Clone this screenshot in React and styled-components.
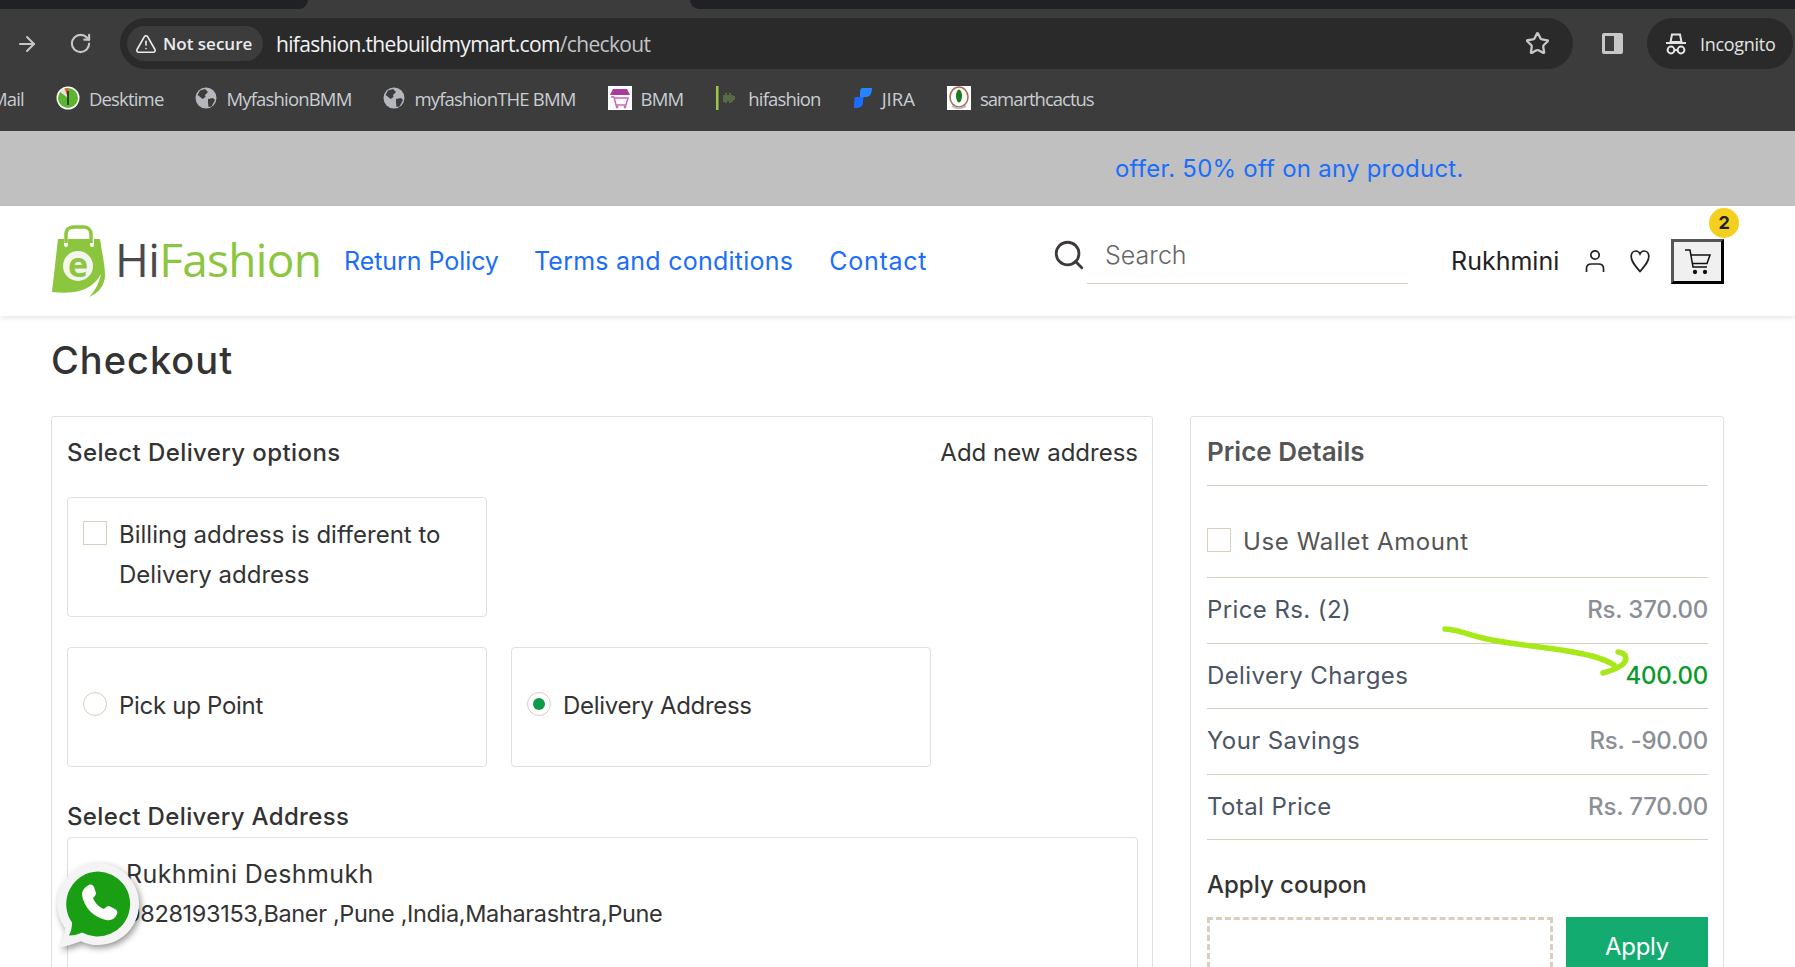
import React from 'react';
import styled, { createGlobalStyle } from 'styled-components';
import { ArrowRight, RotateCw, TriangleAlert, Star, Search } from 'lucide-react';

const GlobalStyle = createGlobalStyle`
  html, body {
    margin: 0;
    padding: 0;
    height: 967px;
    overflow: hidden;
    background: #fff;
    font-family: Inter, "Open Sans", sans-serif;
  }
  * { box-sizing: border-box; }
`;

const Page = styled.div`
  position: relative;
  width: 1795px;
  height: 967px;
  overflow: hidden;
`;

/* browser chrome */
const Chrome = styled.div`
  height: 131px;
  background: #3c3c3c;
  font-family: "Open Sans", sans-serif;
`;

const TabStrip = styled.div`
  display: flex;
  height: 9px;
  background: #3c3c3c;
`;

const TabGap = styled.div`
  width: ${props => props.width || 'auto'};
  flex: ${props => (props.width ? 'none' : 1)};
  background: #202124;
  border-radius: ${props => props.radius};
`;

const TabActive = styled.div`
  width: 382px;
`;

const Toolbar = styled.div`
  display: flex;
  align-items: center;
  height: 51px;
  margin-top: 9px;
  padding-left: 15px;
`;

const NavIcon = styled.div`
  display: flex;
  width: 24px;
  margin-right: ${props => props.gap}px;
  color: #c7c7c7;
`;

const Omnibox = styled.div`
  display: flex;
  align-items: center;
  width: 1453px;
  height: 51px;
  padding: 0 23px 0 7px;
  background: #2a2a2a;
  border-radius: 26px;
`;

const SecurityChip = styled.div`
  display: flex;
  align-items: center;
  gap: 6px;
  width: 136px;
  height: 35px;
  padding-left: 8px;
  background: #3c3c3c;
  border-radius: 18px;
  color: #e8eaed;
  font-size: 17px;
  font-weight: 600;
  white-space: nowrap;
`;

const Url = styled.div`
  flex: 1;
  margin-left: 13px;
  color: #f1f3f4;
  font-size: 21px;
  letter-spacing: -0.66px;
  white-space: nowrap;

  span { color: #c0c3c6; }
`;

const SidePanelIcon = styled.div`
  width: 21px;
  height: 21px;
  margin: 0 24px 0 29px;
  border: 3px solid #c7c7c7;
  border-right-width: 9px;
  border-radius: 2px;
`;

const IncognitoPill = styled.div`
  display: flex;
  align-items: center;
  gap: 13px;
  width: 146px;
  height: 51px;
  padding-left: 18px;
  background: #2a2a2a;
  border-radius: 26px;
  color: #e3e3e3;
  font-size: 18px;
  letter-spacing: -0.3px;
`;

const BookmarkBar = styled.div`
  display: flex;
  align-items: center;
  gap: 32px;
  height: 58px;
  margin-left: -9px;
`;

const Bookmark = styled.div`
  display: flex;
  align-items: center;
  gap: 9px;
  color: #c9cdd1;
  font-size: 18.5px;
  letter-spacing: ${props => props.spacing ?? -0.83}px;
  white-space: nowrap;
`;

/* site */
const Promo = styled.div`
  height: 75px;
  padding-left: 1115px;
  background: #c0c0c0;
  color: #1b6dfb;
  font-size: 24px;
  letter-spacing: 0.23px;
  line-height: 75px;
  white-space: nowrap;
`;

const SiteHeader = styled.header`
  display: flex;
  align-items: center;
  height: 110px;
  padding-left: 50px;
  background: #fff;
  box-shadow: 0 2px 5px rgba(0, 0, 0, 0.1);
`;

const LogoText = styled.div`
  width: 229px;
  margin-left: 8px;
  margin-bottom: 5px;
  color: #8cc63f;
  font-family: "Open Sans", sans-serif;
  font-size: 46px;
  line-height: 60px;
  letter-spacing: -0.7px;

  span { color: #4a4a4a; }
`;

const NavLink = styled.a`
  margin-right: ${props => props.gap}px;
  color: #1b6dfb;
  font-size: 25px;
  letter-spacing: ${props => props.spacing}px;
  white-space: nowrap;
`;

const SearchBox = styled.div`
  position: relative;
  display: flex;
  align-items: center;
  width: 356px;
  height: 66px;
  margin-left: 125px;
  margin-right: 43px;
  padding-left: 50px;
  padding-bottom: 12px;
  color: #666;
  font-size: 25px;
  font-weight: 300;
`;

const SearchIcon = styled.div`
  display: flex;
  margin-left: -50px;
  margin-right: 19px;
  color: #3f3a3a;
`;

const SearchLine = styled.div`
  position: absolute;
  left: 35px;
  right: 0;
  bottom: 10px;
  height: 1px;
  background: #dccfb9;
`;

const UserName = styled.div`
  width: 132px;
  color: #222;
  font-size: 25px;
`;

const HeadIcon = styled.div`
  display: flex;
  justify-content: center;
  width: 24px;
  margin-right: ${props => props.gap}px;
`;

const CartButton = styled.div`
  position: relative;
  display: flex;
  align-items: center;
  justify-content: center;
  width: 53px;
  height: 45px;
  background: #f0f0f0;
  border: 3px solid;
  border-color: #555 #000 #000 #555;
`;

const CartBadge = styled.div`
  position: absolute;
  top: -34px;
  right: -18px;
  width: 30px;
  height: 30px;
  border-radius: 50%;
  background: #f5cf1e;
  color: #222;
  font-size: 18px;
  font-weight: 700;
  line-height: 30px;
  text-align: center;
`;

const Title = styled.h1`
  height: 100px;
  margin: 0;
  padding: 22px 0 0 51px;
  color: #333;
  font-size: 38px;
  font-weight: 500;
  letter-spacing: 1px;
  line-height: 44px;
`;

const Main = styled.div`
  display: grid;
  grid-template-columns: 1102px 534px;
  gap: 37px;
  padding-left: 51px;
`;

const Card = styled.section`
  height: 700px;
  padding: 0 ${props => props.right}px 0 ${props => props.left}px;
  background: #fff;
  border: 1px solid #e6dddd;
  border-radius: 3px;
`;

const LeftHead = styled.div`
  display: flex;
  align-items: center;
  justify-content: space-between;
  height: 70px;
  margin-bottom: 10px;
  color: #333;
  font-size: 24px;
  font-weight: 500;
  letter-spacing: 0.4px;

  span {
    font-weight: 400;
    letter-spacing: 0;
  }
`;

const OptionCard = styled.div`
  display: flex;
  align-items: ${props => (props.center ? 'center' : 'flex-start')};
  gap: 12px;
  width: 420px;
  height: 120px;
  padding: ${props => (props.center ? '0 15px 3px' : '17px 15px')};
  border: 1px solid #e6dddd;
  border-radius: 4px;
  color: #333;
  font-size: 24px;
  letter-spacing: ${props => (props.center ? -0.3 : 0)}px;
  line-height: 40px;
`;

const OptionRow = styled.div`
  display: flex;
  gap: 24px;
  margin-top: 30px;
`;

const CheckBox = styled.div`
  flex: none;
  width: 24px;
  height: 24px;
  margin-top: ${props => props.top}px;
  border: 1px solid #d8cfbf;
  background: #fff;
`;

const Radio = styled.div`
  display: flex;
  flex: none;
  align-items: center;
  justify-content: center;
  width: 24px;
  height: 24px;
  margin-top: -4px;
  border: 1px solid #d8cfbf;
  border-radius: 50%;

  &::after {
    content: '';
    display: ${props => (props.checked ? 'block' : 'none')};
    width: 12px;
    height: 12px;
    border-radius: 50%;
    background: #0d9a4b;
  }
`;

const SectionTitle = styled.div`
  height: 30px;
  margin-top: 35px;
  margin-bottom: 5px;
  color: #333;
  font-size: 24px;
  font-weight: 500;
  letter-spacing: 0.35px;
  line-height: 30px;
`;

const AddressCard = styled.div`
  height: 200px;
  padding: 16px 15px 0 58px;
  border: 1px solid #e6dddd;
  border-radius: 4px;
  color: #333;
`;

const AddressName = styled.div`
  font-size: 25px;
  font-weight: 400;
  letter-spacing: 0.4px;
  line-height: 40px;
`;

const AddressLine = styled.div`
  font-size: 23.5px;
  letter-spacing: -0.35px;
  line-height: 40px;
  white-space: nowrap;
`;

const PriceTitle = styled.div`
  height: 69px;
  border-bottom: 1px solid #d8cfbf;
  color: #555;
  font-size: 26px;
  font-weight: 600;
  line-height: 70px;
`;

const WalletRow = styled.div`
  display: flex;
  align-items: center;
  gap: 12px;
  height: 92px;
  padding-top: 20px;
  border-bottom: 1px solid #d8cfbf;
  color: #555;
  font-size: 24px;
  letter-spacing: 0.6px;
`;

const PriceRow = styled.div`
  display: flex;
  align-items: center;
  justify-content: space-between;
  height: 65.5px;
  padding-bottom: 1px;
  border-bottom: 1px solid #d8cfbf;
  color: #4b5563;
  font-size: 24px;
  letter-spacing: 0.4px;
`;

const PriceValue = styled.span`
  color: ${props => (props.green ? '#0a9a2a' : '#8a8f96')};
  font-weight: 500;
  letter-spacing: -0.2px;
`;

const CouponTitle = styled.div`
  margin-top: 30px;
  color: #333;
  font-size: 24px;
  font-weight: 500;
  line-height: 30px;
`;

const CouponRow = styled.div`
  display: flex;
  gap: 13px;
  margin-top: 17px;
`;

const CouponInput = styled.div`
  width: 346px;
  height: 60px;
  border: 3px dashed #d8cfbf;
`;

const ApplyButton = styled.div`
  width: 142px;
  height: 60px;
  background: #13ab6f;
  color: #fff;
  font-size: 24px;
  letter-spacing: -0.3px;
  line-height: 60px;
  text-align: center;
`;

/* things lying over the page */
const ArrowScribble = styled.svg`
  position: absolute;
  left: 1432px;
  top: 615px;
  pointer-events: none;
`;

const WhatsappFloat = styled.svg`
  position: absolute;
  left: 53px;
  top: 860px;
  filter: drop-shadow(2px 3px 3px rgba(0, 0, 0, 0.4));
`;

const GlobeIcon = () => (
  <svg width="22" height="22" viewBox="0 0 22 22">
    <circle cx="11" cy="11" r="10.5" fill="#b4b8bc" />
    <path d="M5 3.5 10 2 13 5 10 8 10.5 10 7.5 12 4 9 2.5 8ZM13 12l5-1 2 2-3.5 6.5-3 .5-.5-4.5Z" fill="#3c3c3c" />
  </svg>
);

const DesktimeIcon = () => (
  <svg width="24" height="24" viewBox="0 0 24 24">
    <circle cx="12" cy="12" r="11.5" fill="#fff" />
    <circle cx="12" cy="12" r="10" fill="#5cb531" />
    <path d="M12 12V2a10 10 0 0 0-8 4Z" fill="#e4e4e4" />
    <path d="M12 12V2a10 10 0 0 0-3.5.6Z" fill="#e8562a" />
    <path d="M12 5v14" stroke="#222" strokeWidth="1.5" />
  </svg>
);

const BmmIcon = () => (
  <svg width="24" height="24" viewBox="0 0 24 24">
    <rect width="24" height="24" fill="#fff" />
    <path d="M5 3h14l3 6H2Z" fill="#a83b9c" />
    <path d="M3 11h3l2 8h10l2-7H7" fill="none" stroke="#c76ab8" strokeWidth="1.5" />
    <circle cx="9" cy="21" r="1.4" fill="#c76ab8" />
    <circle cx="17" cy="21" r="1.4" fill="#c76ab8" />
  </svg>
);

const HifashionIcon = () => (
  <svg width="24" height="24" viewBox="0 0 24 24">
    <rect x="1" y="0" width="2.5" height="24" fill="#9ac94a" />
    <path d="M9 9v7M11 7v10M13 9v6M15 7v10M17 9v7M19 10v4" stroke="#6c8a4a" strokeWidth="1.2" />
  </svg>
);

const JiraIcon = () => (
  <svg width="20" height="24" viewBox="0 0 20 24">
    <path d="M9 2h10c0 4-1 9-6 9h-2c-3 0-3 2-4 4v-5c0-4 0-8 2-8Z" fill="#2684ff" />
    <path d="M2 11h9c-1 1-1 3-1 5 0 4-2 6-9 6 0-3 0-7 1-11Z" fill="#1a6dff" />
  </svg>
);

const CactusIcon = () => (
  <svg width="24" height="24" viewBox="0 0 24 24">
    <rect width="24" height="24" fill="#fff" />
    <ellipse cx="12" cy="11" rx="9" ry="10" fill="none" stroke="#a5705a" strokeWidth="1.6" />
    <ellipse cx="12" cy="10" rx="3" ry="6.5" fill="#1f7a1f" />
    <path d="M5 20c4 3 10 3 14 0" fill="none" stroke="#bbb" strokeWidth="2" />
  </svg>
);

const IncognitoIcon = () => (
  <svg width="22" height="24" viewBox="0 0 22 24" fill="none" stroke="#e3e3e3" strokeWidth="2">
    <path d="M5.5 10 7 2.5h8L16.5 10Z" />
    <path d="M1 11h20" />
    <circle cx="6" cy="18" r="3.4" />
    <circle cx="16" cy="18" r="3.4" />
    <path d="M9.4 18h3.2" />
  </svg>
);

const PersonIcon = () => (
  <svg width="20" height="24" viewBox="0 0 20 24" fill="none" stroke="#222" strokeWidth="1.7">
    <circle cx="10" cy="6" r="4.2" />
    <path d="M1.5 23v-3.5c0-3 2-4.5 5-4.5h7c3 0 5 1.500 5 4.500V23" />
  </svg>
);

const TallHeartIcon = () => (
  <svg width="20" height="24" viewBox="0 0 20 24" fill="none" stroke="#222" strokeWidth="1.7">
    <path d="M10 22.5C5 16.5 1.2 12.5 1.2 7.5 1.2 4 3.5 2 6 2c2 0 3.2 1.2 4 3 .8-1.8 2-3 4-3 2.500 0 4.800 2 4.800 5.500 0 5-3.800 9-8.800 15Z" />
  </svg>
);

const CartIcon = () => (
  <svg width="28" height="30" viewBox="0 0 28 30" fill="none" stroke="#111" strokeWidth="1.5">
    <path d="M1 4h5l3 17h14" />
    <path d="M7 9h19l-3 8.5H9" />
    <circle cx="11" cy="26" r="1.4" fill="#111" />
    <circle cx="21" cy="26" r="1.4" fill="#111" />
  </svg>
);

const BagLogo = () => (
  <svg width="57" height="72" viewBox="0 0 57 72">
    <path d="M16 18V9c0-5 4-7 8-7h9c5 0 8 3 8 7v9" fill="none" stroke="#8cc63f" strokeWidth="3.5" />
    <path d="M8 14h6v6a2 2 0 0 0 4 0v-6h22v6a2 2 0 0 0 4 0v-6h6c2 14 5 26 5 36 0 10-6 18-16 22 6-6 10-14 12-23-5 9-13 15-22 17-8 2-17 2-27 1Z" fill="#8cc63f" />
    <circle cx="28" cy="41" r="15" fill="#f3f6ee" />
    <text x="28" y="52" textAnchor="middle" fontFamily="Open Sans, sans-serif" fontSize="34" fontWeight="700" fill="#8cc63f">e</text>
  </svg>
);

const App = () => (
  <Page>
    <GlobalStyle />
    <Chrome>
      <TabStrip>
        <TabGap width="308px" radius="0 0 12px 0" />
        <TabActive />
        <TabGap radius="0 0 0 12px" />
      </TabStrip>
      <Toolbar>
        <NavIcon gap={30}><ArrowRight size={24} strokeWidth={2} /></NavIcon>
        <NavIcon gap={27}><RotateCw size={23} strokeWidth={2.2} /></NavIcon>
        <Omnibox>
          <SecurityChip>
            <TriangleAlert size={22} strokeWidth={1.8} />
            Not secure
          </SecurityChip>
          <Url>hifashion.thebuildmymart.com<span>/checkout</span></Url>
          <Star size={25} color="#c7c7c7" strokeWidth={2.2} />
        </Omnibox>
        <SidePanelIcon />
        <IncognitoPill>
          <IncognitoIcon />
          Incognito
        </IncognitoPill>
      </Toolbar>
      <BookmarkBar>
        <Bookmark>Mail</Bookmark>
        <Bookmark><DesktimeIcon />Desktime</Bookmark>
        <Bookmark><GlobeIcon />MyfashionBMM</Bookmark>
        <Bookmark><GlobeIcon />myfashionTHE BMM</Bookmark>
        <Bookmark><BmmIcon />BMM</Bookmark>
        <Bookmark><HifashionIcon />hifashion</Bookmark>
        <Bookmark spacing={0}><JiraIcon />JIRA</Bookmark>
        <Bookmark spacing={-1}><CactusIcon />samarthcactus</Bookmark>
      </BookmarkBar>
    </Chrome>

    <Promo>offer. 50% off on any product.</Promo>

    <SiteHeader>
      <BagLogo />
      <LogoText><span>Hi</span>Fashion</LogoText>
      <NavLink gap={35} spacing={-0.06}>Return Policy</NavLink>
      <NavLink gap={36} spacing={0.25}>Terms and conditions</NavLink>
      <NavLink gap={0} spacing={0.7}>Contact</NavLink>
      <SearchBox>
        <SearchIcon><Search size={34} strokeWidth={2} /></SearchIcon>
        Search
        <SearchLine />
      </SearchBox>
      <UserName>Rukhmini</UserName>
      <HeadIcon gap={21}><PersonIcon /></HeadIcon>
      <HeadIcon gap={19}><TallHeartIcon /></HeadIcon>
      <CartButton>
        <CartIcon />
        <CartBadge>2</CartBadge>
      </CartButton>
    </SiteHeader>

    <Title>Checkout</Title>

    <Main>
      <Card left={15} right={14}>
        <LeftHead>
          Select Delivery options
          <span>Add new address</span>
        </LeftHead>
        <OptionCard>
          <CheckBox top={6} />
          <div>Billing address is different to<br />Delivery address</div>
        </OptionCard>
        <OptionRow>
          <OptionCard center>
            <Radio />
            Pick up Point
          </OptionCard>
          <OptionCard center>
            <Radio checked />
            Delivery Address
          </OptionCard>
        </OptionRow>
        <SectionTitle>Select Delivery Address</SectionTitle>
        <AddressCard>
          <AddressName>Rukhmini Deshmukh</AddressName>
          <AddressLine>9828193153,Baner ,Pune ,India,Maharashtra,Pune</AddressLine>
        </AddressCard>
      </Card>

      <Card left={16} right={15}>
        <PriceTitle>Price Details</PriceTitle>
        <WalletRow>
          <CheckBox top={-3} />
          Use Wallet Amount
        </WalletRow>
        <PriceRow>Price Rs. (2)<PriceValue>Rs. 370.00</PriceValue></PriceRow>
        <PriceRow>Delivery Charges<PriceValue green>400.00</PriceValue></PriceRow>
        <PriceRow>Your Savings<PriceValue>Rs. -90.00</PriceValue></PriceRow>
        <PriceRow>Total Price<PriceValue>Rs. 770.00</PriceValue></PriceRow>
        <CouponTitle>Apply coupon</CouponTitle>
        <CouponRow>
          <CouponInput />
          <ApplyButton>Apply</ApplyButton>
        </CouponRow>
      </Card>
    </Main>

    <ArrowScribble width="210" height="70" viewBox="0 0 210 70" fill="none">
      <path
        d="M13 14C30 15 40 22 60 25 90 31 130 33 160 41 170 44 178 47 182 50M186 37C195 38 196 45 190 50 184 54 178 56 171 58"
        stroke="#a6e81a"
        strokeWidth="5.5"
        strokeLinecap="round"
      />
    </ArrowScribble>

    <WhatsappFloat width="92" height="96" viewBox="0 0 92 96">
      <path d="M45 3a41 41 0 1 1-17 78.300C20 84 13 87 6 87c4-6 6-12 6-19A41 41 0 0 1 45 3Z" fill="#f4f4f4" />
      <path d="M45 11.500a32.500 32.500 0 1 1-16 61c-4 2-8 3-13 3 2-4 3-8 3-13a32.500 32.500 0 0 1 26-51Z" fill="#1a9e13" />
      <path d="M36 25c2-1 4 0 5 2l2 6c0 2-1 3-3 5 2 5 6 9 11 11 2-2 3-3 5-3l6 3c2 1 3 3 2 5-2 5-6 7-11 6-13-3-22-13-24-25 0-5 3-8 7-10Z" fill="#fff" />
    </WhatsappFloat>
  </Page>
);

export default App;
